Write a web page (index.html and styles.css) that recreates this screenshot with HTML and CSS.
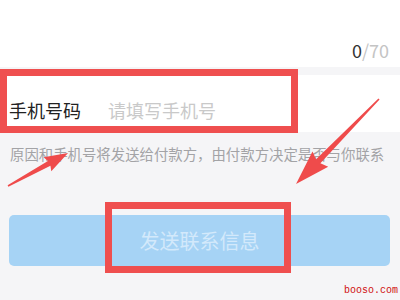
FILE: index.html
```html
<!DOCTYPE html>
<html>
<head>
<meta charset="utf-8">
<link rel="stylesheet" href="styles.css">
</head>
<body>
<div class="top">
  <span class="count"><span class="cur">0</span><span class="max">/70</span></span>
</div>
<div class="row">
  <span class="label">手机号码</span>
  <span class="placeholder">请填写手机号</span>
</div>
<p class="hint">原因和手机号将发送给付款方，由付款方决定是否与你联系</p>
<div class="btn">发送联系信息</div>

<div class="mark mark-input"></div>
<div class="mark mark-btn"></div>
<svg class="arrows" width="400" height="300" viewBox="0 0 400 300">
  <g transform="translate(8 186) rotate(-28.8)">
    <polygon points="0,-0.8 47,-2.6 45,-8 68.5,0 45,8 47,2.6 0,0.8" fill="#ef4b4b"/>
  </g>
  <g transform="translate(379 99) rotate(134.3)">
    <polygon points="0,-0.8 87,-3 84,-11 118.8,0 84,11 87,3 0,0.8" fill="#ef4b4b"/>
  </g>
</svg>
<div class="wm">booso.com</div>
</body>
</html>
```
FILE: styles.css
```css
html, body {
  margin: 0;
  padding: 0;
}
body {
  width: 400px;
  height: 300px;
  overflow: hidden;
  position: relative;
  background: #f5f5f7;
  font-family: "Noto Sans CJK SC", "Noto Sans", sans-serif;
}
.top {
  height: 67px;
  box-sizing: border-box;
  background: #fff;
  display: flex;
  justify-content: flex-end;
  align-items: flex-end;
  padding: 0 11px 5px 0;
}
.count {
  font-size: 18px;
  line-height: 24px;
}
.cur { color: #333; }
.max { color: #c4c4c4; }
.row {
  margin-top: 8px;
  height: 57px;
  box-sizing: border-box;
  background: #fff;
  display: flex;
  align-items: flex-start;
  padding: 23px 0 0 9px;
  font-size: 18px;
  line-height: 24px;
}
.label { color: #222; }
.placeholder { color: #c9c9c9; margin-left: 27px; }
.hint {
  margin: 12px 0 0 0;
  padding-left: 10px;
  font-size: 14.4px;
  line-height: 20px;
  color: #a3a3a6;
  white-space: nowrap;
}
.btn {
  margin: 51px 10px 0 9px;
  height: 51px;
  border-radius: 5px;
  background: #a6d3f5;
  color: #d3e9fb;
  font-size: 20px;
  display: flex;
  align-items: center;
  justify-content: center;
}
.mark {
  position: absolute;
  box-sizing: border-box;
  border: 7px solid #ef4f4f;
}
.mark-input {
  left: 0;
  top: 69px;
  width: 298px;
  height: 64px;
}
.mark-btn {
  left: 105px;
  top: 202px;
  width: 186px;
  height: 71px;
}
.arrows {
  position: absolute;
  left: 0;
  top: 0;
}
.wm {
  position: absolute;
  right: 2px;
  bottom: 3px;
  font-family: "Liberation Mono", monospace;
  font-size: 10px;
  line-height: 12px;
  color: #d01010;
}
```
